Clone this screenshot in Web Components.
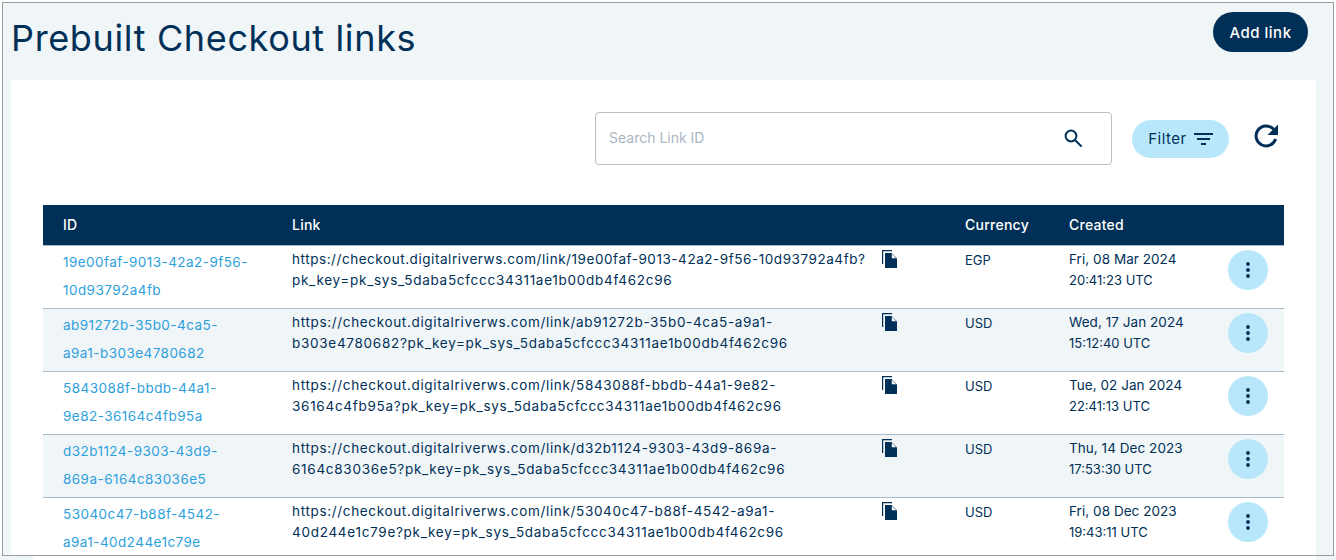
<!DOCTYPE html>
<html>
<head>
<meta charset="utf-8">
<title>Prebuilt Checkout links</title>
<style>
    html, body { margin: 0; padding: 0; height: 560px; overflow: hidden; background: #fff; }
    body { font-family: "Inter", "Liberation Sans", sans-serif; color: #003057; }
</style>
</head>
<body>
<links-page>
    <page-header slot="header" heading="Prebuilt Checkout links" action="Add link"></page-header>
    <links-toolbar></links-toolbar>
    <links-table>
        <link-row uid="19e00faf-9013-42a2-9f56-|10d93792a4fb" url="https://checkout.digitalriverws.com/link/19e00faf-9013-42a2-9f56-10d93792a4fb?|pk_key=pk_sys_5daba5cfccc34311ae1b00db4f462c96" currency="EGP" day="Fri, 08 Mar 2024" time="20:41:23 UTC"></link-row>
        <link-row uid="ab91272b-35b0-4ca5-|a9a1-b303e4780682" url="https://checkout.digitalriverws.com/link/ab91272b-35b0-4ca5-a9a1-|b303e4780682?pk_key=pk_sys_5daba5cfccc34311ae1b00db4f462c96" currency="USD" day="Wed, 17 Jan 2024" time="15:12:40 UTC"></link-row>
        <link-row uid="5843088f-bbdb-44a1-|9e82-36164c4fb95a" url="https://checkout.digitalriverws.com/link/5843088f-bbdb-44a1-9e82-|36164c4fb95a?pk_key=pk_sys_5daba5cfccc34311ae1b00db4f462c96" currency="USD" day="Tue, 02 Jan 2024" time="22:41:13 UTC"></link-row>
        <link-row uid="d32b1124-9303-43d9-|869a-6164c83036e5" url="https://checkout.digitalriverws.com/link/d32b1124-9303-43d9-869a-|6164c83036e5?pk_key=pk_sys_5daba5cfccc34311ae1b00db4f462c96" currency="USD" day="Thu, 14 Dec 2023" time="17:53:30 UTC"></link-row>
        <link-row uid="53040c47-b88f-4542-|a9a1-40d244e1c79e" url="https://checkout.digitalriverws.com/link/53040c47-b88f-4542-a9a1-|40d244e1c79e?pk_key=pk_sys_5daba5cfccc34311ae1b00db4f462c96" currency="USD" day="Fri, 08 Dec 2023" time="19:43:11 UTC"></link-row>
    </links-table>
</links-page>
<page-edge></page-edge>
<script>
class LinksPage extends HTMLElement {
    constructor() {
        super();
        this.attachShadow({ mode: 'open' });
        this.shadowRoot.innerHTML = `
            <style>
                :host {
                    display: block;
                    box-sizing: border-box;
                    margin: 2px 2px 0 2px;
                    height: 554px;
                    border: 1px solid #9a9c9e;
                    background: #f0f5f8;
                    padding: 0 17px 0 8px;
                    overflow: hidden;
                }
                .card {
                    background: #fff;
                    border-radius: 4px;
                    height: 600px;
                    padding: 32px 32px 0 32px;
                }
            </style>
            <slot name="header"></slot>
            <div class="card"><slot></slot></div>
        `;
    }
}

class PageHeader extends HTMLElement {
    constructor() {
        super();
        this.attachShadow({ mode: 'open' });
        this.shadowRoot.innerHTML = `
            <style>
                :host { display: flex; justify-content: space-between; align-items: flex-start; height: 77px; }
                h1 {
                    margin: 18px 0 0 0;
                    font-size: 36px;
                    line-height: 34px;
                    font-weight: 400;
                    letter-spacing: 0.64px;
                    color: #003057;
                }
                button {
                    margin: 9px 8px 0 0;
                    width: 95px;
                    height: 40px;
                    border: none;
                    border-radius: 20px;
                    background: #003057;
                    color: #fff;
                    font: 500 15px "Inter", "Liberation Sans", sans-serif;
                    letter-spacing: 0.5px;
                }
            </style>
            <h1>${this.getAttribute('heading')}</h1>
            <button>${this.getAttribute('action')}</button>
        `;
    }
}

class LinksToolbar extends HTMLElement {
    constructor() {
        super();
        this.attachShadow({ mode: 'open' });
        this.shadowRoot.innerHTML = `
            <style>
                :host { display: flex; justify-content: flex-end; align-items: flex-start; height: 93px; }
                .search {
                    box-sizing: border-box;
                    width: 517px;
                    height: 53px;
                    border: 1px solid #bdbfc1;
                    border-radius: 4px;
                    display: flex;
                    align-items: center;
                    justify-content: space-between;
                    padding: 0 28px 2px 13px;
                    font-size: 14px;
                    color: #a9b7c4;
                }
                .filter {
                    box-sizing: border-box;
                    margin: 8px 0 0 20px;
                    width: 97px;
                    height: 38px;
                    border: none;
                    border-radius: 19px;
                    background: #b8e7fb;
                    color: #003057;
                    display: flex;
                    align-items: center;
                    justify-content: center;
                    gap: 7px;
                    font: 400 15px "Inter", "Liberation Sans", sans-serif;
                    letter-spacing: 0.5px;
                }
                .filter span { margin-top: -2px; }
                .refresh { margin: 10px 4px 0 23px; width: 28px; height: 28px; display: block; }
            </style>
            <div class="search">
                <span>Search Link ID</span>
                <svg width="20" height="20" viewBox="0 0 20 20" fill="none" stroke="#003057" stroke-width="2">
                    <circle cx="8" cy="8" r="5.4"/><path d="M12 12l6 6" stroke-linecap="round"/>
                </svg>
            </div>
            <button class="filter"><span>Filter</span>
                <svg width="19" height="14" viewBox="0 0 19 14" fill="#003057">
                    <rect x="0" y="1" width="19" height="2"/><rect x="3" y="6" width="13" height="2"/><rect x="7" y="11" width="5" height="2"/>
                </svg>
            </button>
            <svg class="refresh" viewBox="0 0 28 28">
                <path d="M21.5 7.2A10 10 0 1 0 23.6 17" fill="none" stroke="#003057" stroke-width="3"/>
                <path d="M26 2.5v10.5h-10.5z" fill="#003057"/>
            </svg>
        `;
    }
}

class LinksTable extends HTMLElement {
    constructor() {
        super();
        this.attachShadow({ mode: 'open' });
        this.shadowRoot.innerHTML = `
            <style>
                :host { display: block; }
                .head {
                    box-sizing: border-box;
                    display: grid;
                    grid-template-columns: 229px 672px 104px 1fr;
                    align-items: center;
                    height: 41px;
                    padding-bottom: 2px;
                    background: #003057;
                    color: #fff;
                    font-size: 14px;
                    font-weight: 500;
                    letter-spacing: 0.25px;
                    border-bottom: 1px solid #a9bbcb;
                }
                .head span { padding-left: 20px; }
                .head span:nth-child(n+3) { padding-left: 21px; }
                ::slotted(link-row:nth-child(even)) { background: #f0f5f8; }
            </style>
            <div class="head"><span>ID</span><span>Link</span><span>Currency</span><span>Created</span></div>
            <slot></slot>
        `;
    }
}

class LinkRow extends HTMLElement {
    constructor() {
        super();
        this.attachShadow({ mode: 'open' });
        const uid = this.getAttribute('uid').split('|');
        const url = this.getAttribute('url').split('|');
        this.shadowRoot.innerHTML = `
            <style>
                :host {
                    display: grid;
                    grid-template-columns: 229px 610px 62px 104px 180px 1fr;
                    box-sizing: border-box;
                    height: 63px;
                    border-bottom: 1px solid #a9bbcb;
                    font-size: 13px;
                    line-height: 21px;
                    color: #003057;
                    white-space: nowrap;
                }
                .cell { padding: 3px 0 0 20px; }
                .id { color: #2d9fdc; line-height: 28px; padding-top: 2px; font-size: 13.5px; letter-spacing: 0.45px; }
                .url { font-size: 13.5px; letter-spacing: 0.72px; }
                .url .first { letter-spacing: 0.66px; }
                :host(:first-child) .url .first { letter-spacing: 0.55px; }
                .currency { padding: 4px 0 0 21px; }
                .created { padding-left: 21px; }
                .day { font-size: 13.5px; letter-spacing: 0.05px; }
                .copy { padding-top: 4px; }
                .copy svg { display: block; }
                .more {
                    margin-top: 4px;
                    width: 40px;
                    height: 40px;
                    border: none;
                    padding: 0;
                    border-radius: 50%;
                    background: #b8e7fb;
                    display: flex;
                    align-items: center;
                    justify-content: center;
                }
            </style>
            <div class="cell id">${uid[0]}<br>${uid[1]}</div>
            <div class="cell url"><span class="first">${url[0]}</span><br>${url[1]}</div>
            <div class="copy">
                <svg width="15" height="18" viewBox="0 0 15 18" fill="#003057">
                    <path d="M0 0h10v1.2H1.2V14H0z"/>
                    <path d="M3 3h6.5L15 8.5V18H3z"/>
                    <path d="M9.8 3.8v4.4h4.4z" fill="#fff"/>
                </svg>
            </div>
            <div class="cell currency">${this.getAttribute('currency')}</div>
            <div class="cell created"><span class="day">${this.getAttribute('day')}</span><br>${this.getAttribute('time')}</div>
            <div>
                <button class="more" aria-label="More">
                    <svg width="4" height="16" viewBox="0 0 4 16" fill="#003057">
                        <circle cx="2" cy="2" r="1.9"/><circle cx="2" cy="8" r="1.9"/><circle cx="2" cy="14" r="1.9"/>
                    </svg>
                </button>
            </div>
        `;
    }
}

// what shows of the page under the frame
class PageEdge extends HTMLElement {
    constructor() {
        super();
        this.attachShadow({ mode: 'open' });
        this.shadowRoot.innerHTML = `
            <style>
                :host { display: grid; grid-template-columns: 33px 1fr 20px; height: 4px; }
                .side { background: #f0f5f8; }
            </style>
            <div class="side"></div><div></div><div class="side"></div>
        `;
    }
}

customElements.define('links-page', LinksPage);
customElements.define('page-header', PageHeader);
customElements.define('links-toolbar', LinksToolbar);
customElements.define('links-table', LinksTable);
customElements.define('link-row', LinkRow);
customElements.define('page-edge', PageEdge);
</script>
</body>
</html>
